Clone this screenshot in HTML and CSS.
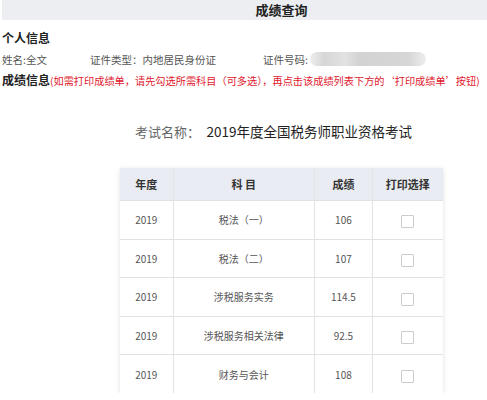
FILE: index.html
```html
<!DOCTYPE html>
<html>
<head>
  <meta charset="utf-8">
  <title>成绩查询</title>
  <link rel="stylesheet" href="styles.css">
</head>
<body>

  <div class="topbar">成绩查询</div>

  <div class="section-title">个人信息</div>
  <div class="info-row">
    <span class="info-name">姓名:全文</span>
    <span class="info-type">证件类型：内地居民身份证</span>
    <span class="info-id">证件号码:</span>
    <span class="blur-box"></span>
  </div>

  <div class="section-title score-title">成绩信息<span class="notice">(如需打印成绩单，请先勾选所需科目（可多选），再点击该成绩列表下方的‘打印成绩单’按钮)</span></div>

  <div class="exam-name">
    <span class="exam-label">考试名称：</span>
    <span class="exam-value">2019年度全国税务师职业资格考试</span>
  </div>

  <table class="score-table">
    <thead>
      <tr>
        <th class="col-year">年度</th>
        <th class="col-subject">科 目</th>
        <th class="col-score">成绩</th>
        <th class="col-print">打印选择</th>
      </tr>
    </thead>
    <tbody>
      <tr>
        <td>2019</td>
        <td>税法（一）</td>
        <td>106</td>
        <td><span class="checkbox"></span></td>
      </tr>
      <tr>
        <td>2019</td>
        <td>税法（二）</td>
        <td>107</td>
        <td><span class="checkbox"></span></td>
      </tr>
      <tr>
        <td>2019</td>
        <td>涉税服务实务</td>
        <td>114.5</td>
        <td><span class="checkbox"></span></td>
      </tr>
      <tr>
        <td>2019</td>
        <td>涉税服务相关法律</td>
        <td>92.5</td>
        <td><span class="checkbox"></span></td>
      </tr>
      <tr>
        <td>2019</td>
        <td>财务与会计</td>
        <td>108</td>
        <td><span class="checkbox"></span></td>
      </tr>
    </tbody>
  </table>

</body>
</html>
```

FILE: styles.css
```css
body {
  margin: 0;
  padding: 0 0 0 2px;
  font-family: "Noto Sans CJK SC", "Noto Sans", sans-serif;
  background-color: #ffffff;
  color: #333333;
}

.topbar {
  height: 20px;
  line-height: 20px;
  padding-left: 74px;
  background-color: #eceef1;
  text-align: center;
  font-size: 13px;
  font-weight: bold;
  color: #222222;
}

.section-title {
  margin-top: 8px;
  height: 20px;
  line-height: 20px;
  font-size: 12px;
  font-weight: bold;
  color: #222222;
}

.score-title {
  margin-top: 1px;
  white-space: nowrap;
}

.notice {
  font-size: 10.2px;
  font-weight: normal;
  color: #e0182d;
}

.info-row {
  margin-top: 1px;
  height: 20px;
  display: flex;
  align-items: center;
  font-size: 10.5px;
  color: #555555;
}

.info-name {
  width: 88px;
}

.info-type {
  width: 173px;
}

.info-id {
  width: 47px;
}

.blur-box {
  width: 116px;
  height: 14px;
  border-radius: 7px;
  background: linear-gradient(90deg, #eeeeee 0%, #d6d6d6 12%, #e2e2e2 30%, #d3d3d3 42%, #d6d6d6 85%, #eeeeee 100%);
}

.exam-name {
  margin-top: 30px;
  height: 20px;
  line-height: 20px;
  padding-left: 133px;
  white-space: nowrap;
}

.exam-label {
  font-size: 13px;
  color: #666666;
}

.exam-value {
  margin-left: 3px;
  font-size: 13.5px;
  color: #222222;
}

.score-table {
  margin: 28px 0 0 118px;
  width: 323px;
  border-collapse: collapse;
  box-shadow: 0 1px 5px rgba(0, 0, 0, 0.12);
  font-size: 10px;
  color: #555555;
}

.score-table th {
  height: 32px;
  padding: 0;
  background-color: #e9ecf2;
  font-size: 11px;
  font-weight: bold;
  color: #333333;
  border-left: 1px solid #e3e6eb;
}

.score-table td {
  height: 37.6px;
  padding: 0;
  text-align: center;
  border-top: 1px solid #e2e2e2;
  border-left: 1px solid #e2e2e2;
}

.score-table th:first-child,
.score-table td:first-child {
  border-left: none;
}

.col-year {
  width: 53px;
}

.col-subject {
  width: 142px;
}

.col-score {
  width: 57px;
}

.col-print {
  width: 71px;
}

.checkbox {
  display: inline-block;
  width: 11px;
  height: 11px;
  margin-top: 3px;
  border: 1px solid #cccccc;
  border-radius: 1px;
  background-color: #ffffff;
  vertical-align: middle;
}
```
